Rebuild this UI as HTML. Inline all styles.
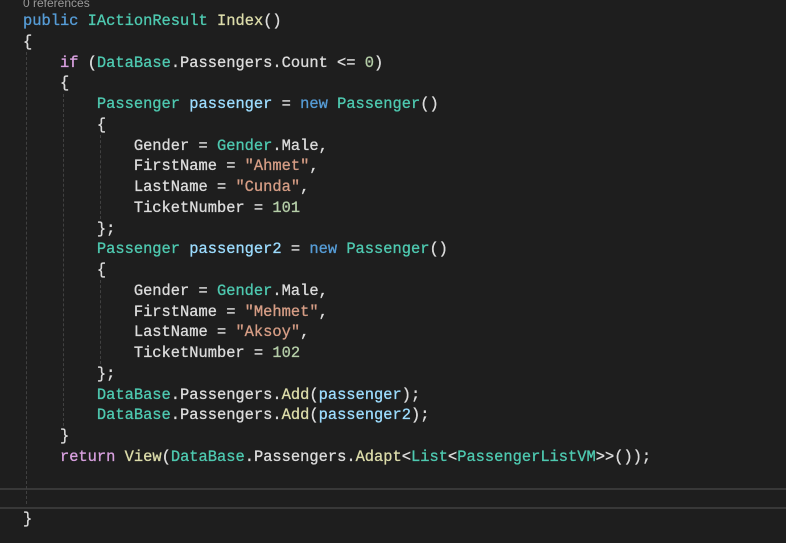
<!DOCTYPE html>
<html><head><style>
body{margin:0;width:786px;height:543px;background:#1e1e1e;overflow:hidden;position:relative}
pre{position:absolute;left:23px;top:11px;margin:0;font-family:"Liberation Mono",monospace;font-size:15.4px;line-height:20.75px;color:#dcdcdc;-webkit-text-stroke:0.3px}
.k{color:#569cd6}.c{color:#d8a0df}.t{color:#4ec9b0}.m{color:#dcdcaa}.v{color:#9cdcfe}.s{color:#d69d85}.n{color:#b5cea8}
.ref{position:absolute;left:23px;top:-4px;font:12px "Liberation Sans",sans-serif;color:#999}
.g{position:absolute;width:0;border-left:1px dashed #404040}
.cur{position:absolute;left:0;width:786px;top:488px;height:17px;border-top:2px solid #383838;border-bottom:2px solid #383838}
</style></head><body>
<div class="ref">0 references</div>
<div class="cur"></div>
<div class="g" style="left:26px;top:52px;height:452px"></div>
<div class="g" style="left:63px;top:94px;height:332px"></div>
<div class="g" style="left:100px;top:135px;height:84px"></div>
<div class="g" style="left:100px;top:280px;height:84px"></div>
<pre><span class="k">public</span> <span class="t">IActionResult</span> <span class="m">Index</span>()
{
    <span class="c">if</span> (<span class="t">DataBase</span>.Passengers.Count &lt;= <span class="n">0</span>)
    {
        <span class="t">Passenger</span> <span class="v">passenger</span> = <span class="k">new</span> <span class="t">Passenger</span>()
        {
            Gender = <span class="t">Gender</span>.Male,
            FirstName = <span class="s">"Ahmet"</span>,
            LastName = <span class="s">"Cunda"</span>,
            TicketNumber = <span class="n">101</span>
        };
        <span class="t">Passenger</span> <span class="v">passenger2</span> = <span class="k">new</span> <span class="t">Passenger</span>()
        {
            Gender = <span class="t">Gender</span>.Male,
            FirstName = <span class="s">"Mehmet"</span>,
            LastName = <span class="s">"Aksoy"</span>,
            TicketNumber = <span class="n">102</span>
        };
        <span class="t">DataBase</span>.Passengers.<span class="m">Add</span>(<span class="v">passenger</span>);
        <span class="t">DataBase</span>.Passengers.<span class="m">Add</span>(<span class="v">passenger2</span>);
    }
    <span class="c">return</span> <span class="m">View</span>(<span class="t">DataBase</span>.Passengers.<span class="m">Adapt</span>&lt;<span class="t">List</span>&lt;<span class="t">PassengerListVM</span>&gt;&gt;());


}</pre>
</body></html>
